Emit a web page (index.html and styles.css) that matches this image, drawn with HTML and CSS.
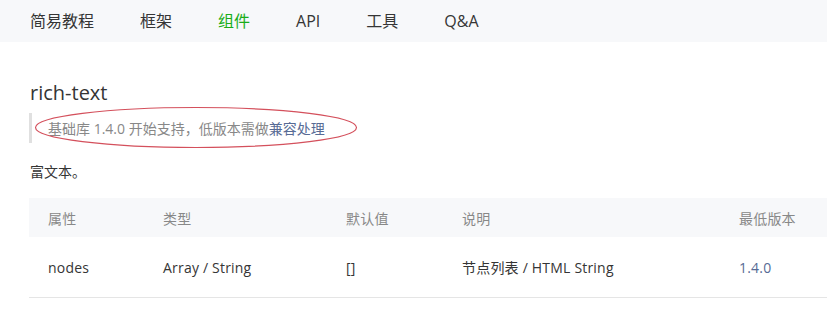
FILE: index.html
```html
<!DOCTYPE html>
<html lang="zh-CN">
<head>
<meta charset="utf-8">
<link rel="stylesheet" href="styles.css">
</head>
<body>
<nav class="nav">
  <a class="nav-item">简易教程</a>
  <a class="nav-item">框架</a>
  <a class="nav-item active">组件</a>
  <a class="nav-item">API</a>
  <a class="nav-item">工具</a>
  <a class="nav-item">Q&amp;A</a>
</nav>
<main class="content">
  <h1 class="title">rich-text</h1>
  <div class="note">
    <p class="note-text">基础库 1.4.0 开始支持，低版本需做<a class="link">兼容处理</a></p>
    <svg class="mark" width="324" height="43" viewBox="0 0 324 43"><ellipse cx="162" cy="21.5" rx="160.5" ry="20" fill="none" stroke="#d4505c" stroke-width="1.2"/></svg>
  </div>
  <p class="desc">富文本。</p>
  <div class="table">
    <div class="row head">
      <div class="cell">属性</div>
      <div class="cell">类型</div>
      <div class="cell">默认值</div>
      <div class="cell">说明</div>
      <div class="cell">最低版本</div>
    </div>
    <div class="row body">
      <div class="cell">nodes</div>
      <div class="cell">Array / String</div>
      <div class="cell">[]</div>
      <div class="cell">节点列表 / HTML String</div>
      <div class="cell"><a class="link">1.4.0</a></div>
    </div>
  </div>
</main>
</body>
</html>
```
FILE: styles.css
```css
html, body {
  margin: 0;
  padding: 0;
  background: #fff;
}
body {
  font-family: "Open Sans", "Noto Sans CJK SC", sans-serif;
  color: #353535;
  font-size: 14px;
  overflow: hidden;
}
.nav {
  display: flex;
  align-items: center;
  height: 42px;
  background: #f7f8fa;
  padding-left: 30px;
  gap: 46px;
}
.nav-item {
  font-size: 16px;
  color: #353535;
  line-height: 42px;
}
.nav-item.active {
  color: #1aad19;
}
.content {
  padding: 0 0 0 29px;
}
.title {
  margin: 38px 0 0 1px;
  font-size: 20px;
  font-weight: normal;
  line-height: 26px;
  color: #353535;
}
.note {
  position: relative;
  margin-top: 7px;
  border-left: 3px solid #e0e0e0;
  height: 30px;
  display: flex;
  align-items: center;
  padding-left: 16px;
}
.note-text {
  margin: 0;
  color: #888;
  font-size: 14px;
}
.link {
  color: #576b95;
}
.mark {
  position: absolute;
  left: 2px;
  top: -7px;
}
.desc {
  margin: 18px 0 0 1px;
  line-height: 22px;
}
.table {
  margin-top: 15px;
  width: 820px;
}
.row {
  display: grid;
  grid-template-columns: 115px 183px 116px 277px 1fr;
  align-items: center;
}
.row.head {
  background: #f7f8fa;
  height: 39px;
  color: #888;
}
.row.body {
  height: 60px;
  border-bottom: 1px solid #e5e5e5;
}
.cell {
  padding-left: 19px;
  white-space: nowrap;
  letter-spacing: 0.2px;
}
```
